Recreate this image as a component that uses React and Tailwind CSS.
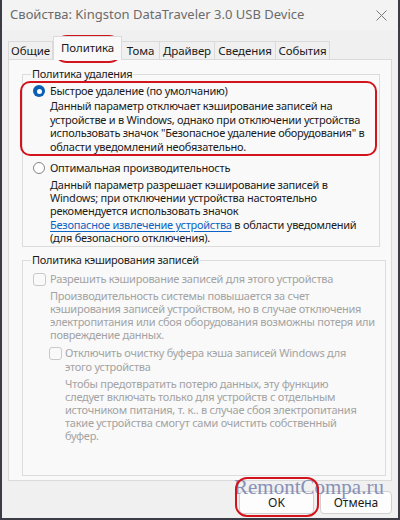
import React from "react";

const font = { fontFamily: '"Noto Sans", "DejaVu Sans", sans-serif' };

const tabs = [
  { label: "Общие", w: "w-[45px]" },
  { label: "Политика", w: "w-[69px]", active: true },
  { label: "Тома", w: "w-[38px]" },
  { label: "Драйвер", w: "w-[55px]" },
  { label: "Сведения", w: "w-[61px]" },
  { label: "События", w: "w-[54px]" },
];

const Radio = ({ checked }) =>
  checked ? (
    <span className="w-[12px] h-[12px] rounded-full bg-[#0a5fb4] flex items-center justify-center shrink-0">
      <span className="w-[5px] h-[5px] rounded-full bg-white" />
    </span>
  ) : (
    <span className="block w-[12px] h-[12px] rounded-full border border-[#858585] bg-white shrink-0" />
  );

const Check = () => (
  <span className="block w-[13px] h-[13px] rounded-[3px] border border-[#c9c9c9] bg-[#f9f9f9] shrink-0" />
);

const Lines = ({ lines, className }) => (
  <div className={className}>
    {lines.map((l, i) => (
      <div key={i} className="whitespace-nowrap">
        {l}
      </div>
    ))}
  </div>
);

const App = () => {
  return (
    <div
      style={font}
      className="relative w-[400px] h-[520px] bg-[#f0f0f0] border-l-2 border-r-2 border-b-2 border-[#3c3c46] flex flex-col text-[11px] tracking-[-0.25px] text-[#1b1b1b] overflow-hidden"
    >
      {/* title bar */}
      <div className="h-[30px] flex items-center justify-between pl-[8px] pr-[10px] bg-[#f3f3f3] tracking-normal">
        <span className="text-[13px] text-[#6b6b6b]">
          Свойства: Kingston DataTraveler 3.0 USB Device
        </span>
        <svg width="11" height="11" viewBox="0 0 11 11" className="mr-[1px]">
          <path d="M0.5 0.5 L10.5 10.5 M10.5 0.5 L0.5 10.5" stroke="#7a7a7a" strokeWidth="1" />
        </svg>
      </div>

      {/* tabs */}
      <div className="flex items-end pl-[6px] mt-[6px] h-[23px] relative z-10 text-[11.5px] tracking-[-0.1px]">
        {tabs.map((t) =>
          t.active ? (
            <div
              key={t.label}
              className={`${t.w} h-[24px] -mb-px bg-[#f9f9f9] border border-b-0 border-[#dadada] flex items-center justify-center pb-[2px]`}
            >
              {t.label}
            </div>
          ) : (
            <div
              key={t.label}
              className={`${t.w} h-[18px] border border-b-0 border-l-0 first:border-l border-[#dadada] bg-[#f0f0f0] flex items-center justify-center`}
            >
              {t.label}
            </div>
          )
        )}
      </div>

      {/* tab page */}
      <div className="mx-[6px] h-[422px] bg-[#f9f9f9] border border-[#dadada] pl-[13px] pr-[11px] pb-[4px] flex flex-col">
        <fieldset className="mt-[6px] border border-[#dcdcdc] px-[10px] pb-[2px]">
          <legend className="px-[1px] -ml-[2px] leading-[16px]">Политика удаления</legend>
          <div className="flex items-center gap-[5px] leading-[14px] pt-[2px]">
            <Radio checked />
            <span>Быстрое удаление (по умолчанию)</span>
          </div>
          <Lines
            className="pl-[17px] mt-[1px] leading-[13.7px]"
            lines={[
              "Данный параметр отключает кэширование записей на",
              "устройстве и в Windows, однако при отключении устройства",
              "использовать значок \"Безопасное удаление оборудования\" в",
              "области уведомлений необязательно.",
            ]}
          />
          <div className="flex items-center gap-[5px] leading-[14px] mt-[7px]">
            <Radio />
            <span>Оптимальная производительность</span>
          </div>
          <div className="pl-[17px] mt-[3px] leading-[13.3px]">
            <div>Данный параметр разрешает кэширование записей в</div>
            <div>Windows; при отключении устройства настоятельно</div>
            <div>рекомендуется использовать значок</div>
            <div className="whitespace-nowrap">
              <span className="text-[#0b63c4] underline underline-offset-2">
                Безопасное извлечение устройства
              </span>{" "}
              в области уведомлений
            </div>
            <div>(для безопасного отключения).</div>
          </div>
        </fieldset>

        <fieldset className="mt-[5px] flex-1 border border-[#dcdcdc] px-[10px]">
          <legend className="px-[1px] -ml-[2px] leading-[16px]">Политика кэширования записей</legend>
          <div className="text-[#a3a3a3]">
            <div className="flex items-center gap-[4px] leading-[14px] pt-[4px]">
              <Check />
              <span>Разрешить кэширование записей для этого устройства</span>
            </div>
            <Lines
              className="pl-[17px] mt-[3px] leading-[13px]"
              lines={[
                "Производительность системы повышается за счет",
                "кэширования записей устройством, но в случае отключения",
                "электропитания или сбоя оборудования возможны потеря или",
                "повреждение данных.",
              ]}
            />
            <div className="flex gap-[3px] pl-[16px] mt-[5px] leading-[14px]">
              <div className="pt-[1px]">
                <Check />
              </div>
              <div>
                <div>Отключить очистку буфера кэша записей Windows для</div>
                <div>этого устройства</div>
              </div>
            </div>
            <Lines
              className="pl-[32px] mt-[3px] leading-[13px]"
              lines={[
                "Чтобы предотвратить потерю данных, эту функцию",
                "следует включать только для устройств с отдельным",
                "источником питания, т. к..  в случае сбоя электропитания",
                "такие устройства смогут сами очистить собственный",
                "буфер.",
              ]}
            />
          </div>
        </fieldset>
      </div>

      {/* buttons */}
      <div className="flex justify-end gap-[6px] pr-[6px] mt-[10px] tracking-normal">
        <button className="w-[75px] h-[23px] bg-[#fdfdfd] border border-[#d0d0d0] rounded-[4px] text-[12px]">
          OK
        </button>
        <button className="w-[72px] h-[23px] bg-[#fdfdfd] border border-[#d0d0d0] rounded-[4px] text-[12px]">
          Отмена
        </button>
      </div>

      {/* site watermark */}
      <div
        className="absolute left-[232px] top-[475px] text-[21px] leading-[24px] tracking-normal text-[#6f79aa] opacity-80 pointer-events-none"
        style={{ fontFamily: '"Liberation Serif", serif' }}
      >
        RemontCompa.ru
      </div>

      {/* red highlight marks */}
      <div className="absolute left-[51px] top-[35px] w-[70px] h-[28px] rounded-full border-[2.5px] border-[#d4141c] pointer-events-none" />
      <div className="absolute left-[18px] top-[81px] w-[357px] h-[75px] rounded-[10px] border-[2.5px] border-[#d4141c] pointer-events-none" />
      <div className="absolute left-[233px] top-[477px] w-[84px] h-[40px] rounded-[12px] border-[2.5px] border-[#d4141c] pointer-events-none" />
    </div>
  );
};

export default App;
